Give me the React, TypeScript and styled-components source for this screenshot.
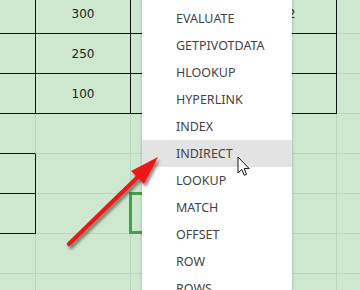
import React from "react";
import styled, { createGlobalStyle } from "styled-components";

const Global = createGlobalStyle`
  html, body { margin: 0; padding: 0; background: #cde8cf; }
  * { box-sizing: border-box; }
`;

const Frame = styled.div`
  position: relative;
  width: 360px;
  height: 290px;
  overflow: hidden;
  background: #cde8cf;
`;

const Sheet = styled.div`
  display: grid;
  grid-template-columns: 36px 95px 101px 105px 60px;
  grid-auto-rows: 40px;
  margin-top: -6px;
`;

const Cell = styled.div<{ $right?: boolean; $bottom?: boolean; $selected?: boolean; $align?: string }>`
  position: relative;
  display: flex;
  align-items: center;
  justify-content: ${(p) => p.$align || "center"};
  border-right: 1px solid ${(p) => (p.$right ? "#111" : "#b9d5bc")};
  border-bottom: 1px solid ${(p) => (p.$bottom ? "#111" : "#b9d5bc")};
  font-family: "DejaVu Sans", Verdana, sans-serif;
  font-size: 12px;
  color: #222;
  ${(p) =>
    p.$selected
      ? `&::after {
    content: "";
    position: absolute;
    left: -2px;
    top: -2px;
    right: -2px;
    bottom: -1px;
    border: 3px solid #43a047;
  }`
      : ""}
`;

const Menu = styled.div`
  position: absolute;
  left: 142px;
  top: 0;
  width: 150px;
  height: 310px;
  background: #ffffff;
  box-shadow: 0 0 3px rgba(0, 0, 0, 0.25);
  padding-top: 5px;
  display: flex;
  flex-direction: column;
`;

const Item = styled.div<{ $active?: boolean }>`
  height: 27px;
  flex: none;
  display: flex;
  align-items: center;
  padding-left: 34px;
  font-family: "Noto Sans", "Open Sans", sans-serif;
  font-size: 12.5px;
  color: #444;
  background: ${(p) => (p.$active ? "#e3e3e3" : "transparent")};
`;

const Overlay = styled.svg`
  position: absolute;
  left: 0;
  top: 0;
  pointer-events: none;
`;

type Row = { cells: string[]; right: boolean[]; bottom: boolean[]; sel?: number };

const rows: Row[] = [
  { cells: ["", "300", "", "512", ""], right: [true, true, true, true, false], bottom: [true, true, true, true, false] },
  { cells: ["", "250", "", "", ""], right: [true, true, true, true, false], bottom: [true, true, true, true, false] },
  { cells: ["", "100", "", "", ""], right: [true, true, true, true, false], bottom: [true, true, true, true, false] },
  { cells: ["", "", "", "", ""], right: [false, false, false, false, false], bottom: [true, false, false, false, false] },
  { cells: ["", "", "", "", ""], right: [true, false, false, false, false], bottom: [true, false, false, false, false] },
  { cells: ["", "", "", "", ""], right: [true, false, false, false, false], bottom: [true, false, false, false, false], sel: 2 },
  { cells: ["", "", "", "", ""], right: [false, false, false, false, false], bottom: [false, false, false, false, false] },
  { cells: ["", "", "", "", ""], right: [false, false, false, false, false], bottom: [false, false, false, false, false] },
];

const items = ["EVALUATE", "GETPIVOTDATA", "HLOOKUP", "HYPERLINK", "INDEX", "INDIRECT", "LOOKUP", "MATCH", "OFFSET", "ROW", "ROWS"];

export default function App() {
  return (
    <Frame>
      <Global />
      <Sheet>
        {rows.map((r, ri) =>
          r.cells.map((c, ci) => (
            <Cell key={`${ri}-${ci}`} $right={r.right[ci]} $bottom={r.bottom[ci]} $selected={r.sel === ci}>
              {c}
            </Cell>
          ))
        )}
      </Sheet>
      <Menu>
        {items.map((it) => (
          <Item key={it} $active={it === "INDIRECT"}>
            {it}
          </Item>
        ))}
      </Menu>
      <Overlay width="360" height="290" viewBox="0 0 360 290">
        <defs>
          <filter id="sh" x="-20%" y="-20%" width="140%" height="140%">
            <feDropShadow dx="2" dy="3" stdDeviation="1.6" floodColor="#000" floodOpacity="0.45" />
          </filter>
        </defs>
        <g filter="url(#sh)">
          <line x1="69" y1="244" x2="143" y2="172" stroke="#f01818" strokeWidth="4.5" strokeLinecap="round" />
          <path d="M158 157 L131 171 L144 184 Z" fill="#f01818" />
        </g>
        <path
          d="M238 157 L238 173 L241.8 169.5 L244.3 175.3 L246.6 174.3 L244.1 168.6 L249.2 168.6 Z"
          fill="#fff"
          stroke="#111"
          strokeWidth="1"
          strokeLinejoin="round"
        />
      </Overlay>
    </Frame>
  );
}
